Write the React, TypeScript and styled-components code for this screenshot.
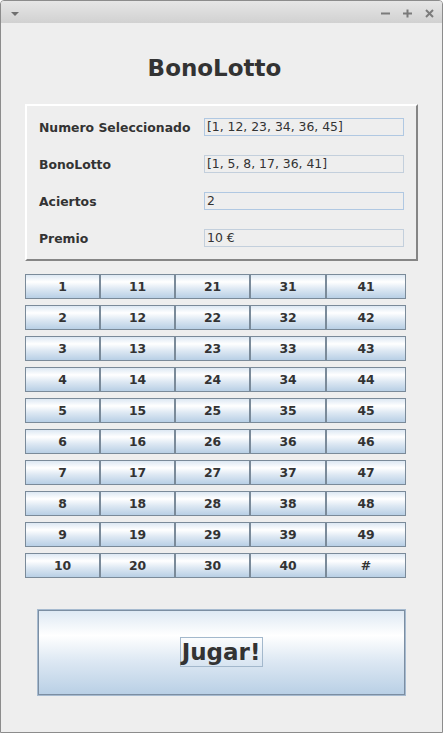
import React from "react";
import styled, { createGlobalStyle } from "styled-components";

const Global = createGlobalStyle`
  html, body { margin: 0; padding: 0; background: #ffffff; }
  body { font-family: "DejaVu Sans", Verdana, sans-serif; }
  * { box-sizing: border-box; }
`;

const Window = styled.div`
  width: 443px;
  height: 733px;
  border: 1px solid #8c8c8c;
  border-radius: 4px 4px 0 0;
  background: #eeeeee;
  display: flex;
  flex-direction: column;
  overflow: hidden;
`;

const TitleBar = styled.div`
  height: 22px;
  flex: none;
  background: linear-gradient(#e6e6e6, #d1d1d1);
  display: flex;
  align-items: center;
  justify-content: space-between;
  padding: 0 8px 0 10px;
`;

const MenuArrow = styled.div`
  width: 0;
  height: 0;
  margin-top: 4px;
  border-left: 4px solid transparent;
  border-right: 4px solid transparent;
  border-top: 4px solid #6f6f6f;
`;

const WinControls = styled.div`
  display: flex;
  gap: 13px;
  margin-top: 3px;
`;

const Content = styled.div`
  display: flex;
  flex-direction: column;
  padding: 0 24px;
`;

const Title = styled.h1`
  margin: 32px 0 0;
  padding-right: 14px;
  font-size: 23px;
  line-height: 27px;
  font-weight: bold;
  color: #333333;
  text-align: center;
`;

const Panel = styled.div`
  margin-top: 22px;
  width: 393px;
  height: 157px;
  border-top: 2px solid #ffffff;
  border-left: 2px solid #ffffff;
  border-right: 2px solid #858585;
  border-bottom: 2px solid #858585;
  padding: 12px;
  display: grid;
  grid-template-columns: 165px 200px;
  grid-auto-rows: 18px;
  row-gap: 19px;
  align-items: center;
`;

const Label = styled.div`
  font-size: 12.4px;
  font-weight: bold;
  color: #333333;
  white-space: nowrap;
`;

const Field = styled.div<{ $muted?: boolean }>`
  height: 18px;
  border: 1px solid ${(p) => (p.$muted ? "#c3cfdc" : "#b0c8e2")};
  padding: 0 2px;
  font-size: 12.4px;
  line-height: 16px;
  color: #333333;
  white-space: nowrap;
`;

const NumberGrid = styled.div`
  margin-top: 13px;
  display: grid;
  grid-template-columns: 75px 75px 75px 76px 80px;
  grid-auto-rows: 25px;
  row-gap: 6px;
  width: 381px;
`;

const metalGradient = `linear-gradient(
  180deg,
  #dde8f3 0%,
  #ffffff 30%,
  #dde8f3 60%,
  #b8cfe5 100%
)`;

const NumButton = styled.button`
  margin: 0;
  padding: 0;
  border: 1px solid #7a8a99;
  background: ${metalGradient};
  font-family: "DejaVu Sans", Verdana, sans-serif;
  font-size: 12.4px;
  font-weight: bold;
  color: #333333;
  display: flex;
  align-items: center;
  justify-content: center;
`;

const PlayButton = styled.button`
  margin: 31px 0 0 12px;
  width: 369px;
  height: 87px;
  padding: 0;
  border: 1px solid #a6bacf;
  box-shadow: inset 0 0 0 1px #7c8ea2;
  background: ${metalGradient};
  display: flex;
  align-items: center;
  justify-content: center;
  font-family: "DejaVu Sans", Verdana, sans-serif;
  font-size: 23px;
  font-weight: bold;
  color: #333333;
`;

const FocusRing = styled.span`
  border: 1px solid #a3b8cc;
  padding: 0 2px 0 1px;
  line-height: 28px;
  margin-top: -1px;
`;

const ControlIcon: React.FC<{ kind: "min" | "max" | "close" }> = ({ kind }) => (
  <svg width="9" height="9" viewBox="0 0 9 9" fill="none" stroke="#7b7b7b" strokeWidth="2">
    {kind === "min" && <line x1="0" y1="4.5" x2="9" y2="4.5" />}
    {kind === "max" && (
      <>
        <line x1="0" y1="4.5" x2="9" y2="4.5" />
        <line x1="4.5" y1="0.5" x2="4.5" y2="8.5" />
      </>
    )}
    {kind === "close" && (
      <>
        <line x1="1" y1="1" x2="8" y2="8" />
        <line x1="8" y1="1" x2="1" y2="8" />
      </>
    )}
  </svg>
);

const fields: { label: string; value: string; muted?: boolean }[] = [
  { label: "Numero Seleccionado", value: "[1, 12, 23, 34, 36, 45]" },
  { label: "BonoLotto", value: "[1, 5, 8, 17, 36, 41]", muted: true },
  { label: "Aciertos", value: "2" },
  { label: "Premio", value: "10 €", muted: true },
];

const numbers: string[] = [];
for (let r = 0; r < 10; r++) {
  for (let c = 0; c < 5; c++) {
    const n = c * 10 + r + 1;
    numbers.push(n === 50 ? "#" : String(n));
  }
}

export default function App() {
  return (
    <>
      <Global />
      <Window>
        <TitleBar>
          <MenuArrow />
          <WinControls>
            <ControlIcon kind="min" />
            <ControlIcon kind="max" />
            <ControlIcon kind="close" />
          </WinControls>
        </TitleBar>
        <Content>
          <Title>BonoLotto</Title>
          <Panel>
            {fields.map((f) => (
              <React.Fragment key={f.label}>
                <Label>{f.label}</Label>
                <Field $muted={f.muted}>{f.value}</Field>
              </React.Fragment>
            ))}
          </Panel>
          <NumberGrid>
            {numbers.map((n) => (
              <NumButton key={n}>{n}</NumButton>
            ))}
          </NumberGrid>
          <PlayButton>
            <FocusRing>Jugar!</FocusRing>
          </PlayButton>
        </Content>
      </Window>
    </>
  );
}
